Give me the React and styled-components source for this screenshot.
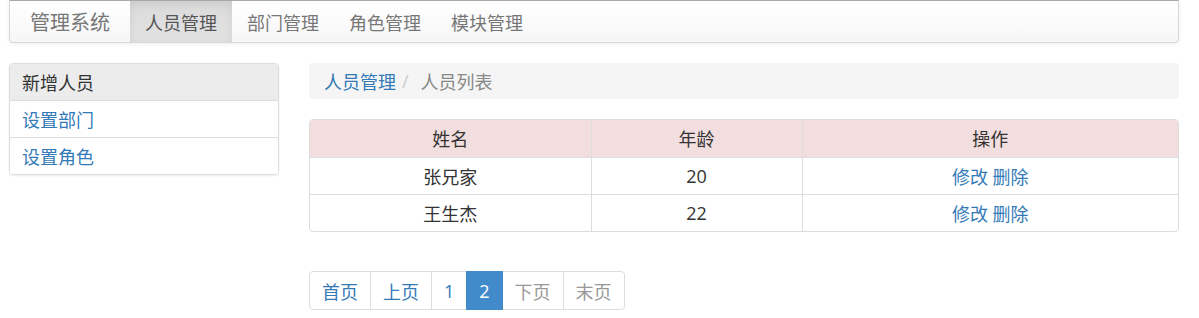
import React from 'react'
import styled, { createGlobalStyle } from 'styled-components'

const GlobalStyle = createGlobalStyle`
  html, body {
    margin: 0;
    padding: 0;
    background: #fff;
  }
  body {
    font-family: "Open Sans", "Noto Sans CJK SC", sans-serif;
    font-size: 18px;
    color: #333;
  }
  * { box-sizing: border-box; }
`

const navItems = ['人员管理', '部门管理', '角色管理', '模块管理']
const sideItems = ['新增人员', '设置部门', '设置角色']
const people = [
  { name: '张兄家', age: 20 },
  { name: '王生杰', age: 22 },
]
const pages = [
  { label: '首页' },
  { label: '上页' },
  { label: '1' },
  { label: '2', active: true },
  { label: '下页', disabled: true },
  { label: '末页', disabled: true },
]

function App() {
  return (
    <Page>
      <GlobalStyle />
      <Navbar>
        <Brand>管理系统</Brand>
        {navItems.map((item, i) => (
          <NavLink key={item} active={i === 0}>{item}</NavLink>
        ))}
      </Navbar>
      <Body>
        <SideList>
          {sideItems.map((item, i) => (
            <SideItem key={item} active={i === 0}>{item}</SideItem>
          ))}
        </SideList>
        <Main>
          <Breadcrumb>
            <Crumb>人员管理</Crumb>
            <Sep>/</Sep>
            <Crumb current>人员列表</Crumb>
          </Breadcrumb>
          <TableWrap>
            <Table>
              <colgroup>
                <col style={{ width: 281 }} />
                <col style={{ width: 211 }} />
                <col />
              </colgroup>
              <thead>
                <tr>
                  <Th>姓名</Th>
                  <Th>年龄</Th>
                  <Th>操作</Th>
                </tr>
              </thead>
              <tbody>
                {people.map(p => (
                  <tr key={p.name}>
                    <Td>{p.name}</Td>
                    <Td>{p.age}</Td>
                    <Td>
                      <Action>修改</Action> <Action>删除</Action>
                    </Td>
                  </tr>
                ))}
              </tbody>
            </Table>
          </TableWrap>
          <Pagination>
            {pages.map(p => (
              <PageItem key={p.label} active={p.active} disabled={p.disabled}>
                {p.label}
              </PageItem>
            ))}
          </Pagination>
        </Main>
      </Body>
    </Page>
  )
}

export default App

const Page = styled.div`
  width: 1170px;
  margin-left: 9px;
`

const Navbar = styled.div`
  display: flex;
  align-items: stretch;
  height: 43px;
  background-image: linear-gradient(to bottom, #fff 0, #f6f6f6 100%);
  border: 1px solid #d8d8d8;
  border-top-color: #a8a8a8;
  border-radius: 0 0 4px 4px;
  box-shadow: inset 0 1px 0 rgba(255,255,255,.15), 0 1px 5px rgba(0,0,0,.075);
  overflow: hidden;
`

const Brand = styled.div`
  display: flex;
  align-items: center;
  padding: 0 20px 0 20px;
  font-size: 20px;
  color: #777;
`

const NavLink = styled.div`
  display: flex;
  align-items: center;
  padding: 0 15px;
  color: ${p => (p.active ? '#555' : '#777')};
  background-image: ${p => (p.active ? 'linear-gradient(to bottom, #dbdbdb 0, #e2e2e2 100%)' : 'none')};
  box-shadow: ${p => (p.active ? 'inset 0 3px 9px rgba(0,0,0,.075)' : 'none')};
`

const Body = styled.div`
  display: flex;
  gap: 30px;
  margin-top: 20px;
  align-items: flex-start;
`

const SideList = styled.div`
  width: 270px;
  flex: none;
  border: 1px solid #ddd;
  border-radius: 4px;
  overflow: hidden;
  box-shadow: 0 1px 2px rgba(0,0,0,.075);
`

const SideItem = styled.div`
  height: 37px;
  display: flex;
  align-items: center;
  padding: 0 12px;
  color: ${p => (p.active ? '#333' : '#337ab7')};
  background: ${p => (p.active ? '#ececec' : '#fff')};
  border-top: 1px solid #ddd;
  &:first-child { border-top: none; height: 36px; }
`

const Main = styled.div`
  flex: 1;
  min-width: 0;
`

const Breadcrumb = styled.div`
  height: 36px;
  display: flex;
  align-items: center;
  padding: 0 15px;
  background: #f5f5f5;
  border-radius: 4px;
  margin-bottom: 20px;
`

const Crumb = styled.span`
  color: ${p => (p.current ? '#888' : '#337ab7')};
`

const Sep = styled.span`
  color: #ccc;
  padding: 0 12px 0 6px;
`

const TableWrap = styled.div`
  border: 1px solid #ddd;
  border-radius: 4px;
  overflow: hidden;
`

const Table = styled.table`
  width: 100%;
  border-collapse: collapse;
  table-layout: fixed;
`

const Th = styled.th`
  height: 37px;
  padding: 0;
  font-weight: normal;
  text-align: center;
  background: #f2dede;
  border-left: 1px solid #ddd;
  &:first-child { border-left: none; }
`

const Td = styled.td`
  height: 37px;
  padding: 0;
  text-align: center;
  border-top: 1px solid #ddd;
  border-left: 1px solid #ddd;
  &:first-child { border-left: none; }
`

const Action = styled.span`
  color: #337ab7;
`

const Pagination = styled.div`
  display: inline-flex;
  margin-top: 39px;
  border-radius: 4px;
`

const PageItem = styled.span`
  height: 39px;
  display: flex;
  align-items: center;
  padding: 0 12px;
  border: 1px solid ${p => (p.active ? '#428bca' : '#ddd')};
  margin-left: -1px;
  background: ${p => (p.active ? '#428bca' : '#fff')};
  color: ${p => (p.active ? '#fff' : p.disabled ? '#999' : '#337ab7')};
  position: relative;
  z-index: ${p => (p.active ? 2 : 0)};
  &:first-child { margin-left: 0; border-radius: 4px 0 0 4px; }
  &:last-child { border-radius: 0 4px 4px 0; }
`
